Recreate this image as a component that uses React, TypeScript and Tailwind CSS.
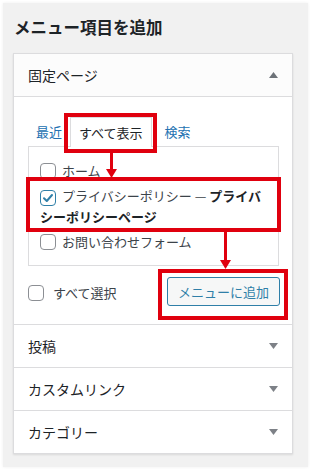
import React from "react";

function Checkbox({ checked = false }: { checked?: boolean }) {
  return (
    <span
      className={`inline-flex w-[16px] h-[16px] shrink-0 items-center justify-center rounded-[4px] border bg-white align-[-3px] ${
        checked ? "border-[#2f7fa8] border-[1.5px]" : "border-[#8c8f94]"
      }`}
    >
      {checked && (
        <svg width="12" height="12" viewBox="0 0 12 12">
          <path d="M2 6.2 L4.8 9 L10 3" fill="none" stroke="#2f7fa8" strokeWidth="2" strokeLinecap="round" strokeLinejoin="round" />
        </svg>
      )}
    </span>
  );
}

function Caret({ up = false }: { up?: boolean }) {
  return (
    <svg width="9" height="6" viewBox="0 0 9 6" className="mr-[14px]">
      {up ? <polygon points="0,6 9,6 4.5,0" fill="#6d7278" /> : <polygon points="0,0 9,0 4.5,6" fill="#7d8187" />}
    </svg>
  );
}

function DownArrow({ height }: { height: number }) {
  return (
    <svg width="11" height={height} viewBox={`0 0 11 ${height}`}>
      <rect x="4" y="0" width="3" height={height - 8} fill="#e0000e" />
      <polygon points={`0,${height - 9} 11,${height - 9} 5.5,${height}`} fill="#e0000e" />
    </svg>
  );
}

export default function App() {
  const sections = ["投稿", "カスタムリンク", "カテゴリー"];

  return (
    <div
      className="relative w-[313px] h-[474px] bg-white pt-[3px] pl-[3px] text-[#1d2327]"
      style={{ fontFamily: '"Noto Sans CJK JP", "Noto Sans", sans-serif' }}
    >
      <div className="w-[305px] h-[464px] bg-[#f1f1f1] pl-[10px] pt-[12px] shadow-[0_0_3px_rgba(0,0,0,0.07)]">
        <h2 className="text-[16.5px] font-bold leading-[24px] ml-px mb-[14px]">メニュー項目を追加</h2>

        <div className="w-[280px] border border-[#dcdcde] bg-white shadow-[0_1px_2px_rgba(0,0,0,0.1)]">
          {/* 固定ページ */}
          <div className="h-[43px] flex items-center justify-between pl-[14px] border-b border-[#dcdcde] bg-[#fcfcfc]">
            <span className="text-[14px]">固定ページ</span>
            <Caret up />
          </div>

          <div className="pt-[20px] pb-[18px] pl-[14px] pr-[13px]">
            <div className="h-[29px] flex items-end text-[13px] leading-[20px]">
              <span className="ml-[8px] mb-[4px] text-[#2271b1]">最近</span>
              <span className="ml-[8px] -mb-px h-[30px] px-[8px] flex items-center border border-b-0 border-[#dcdcde] bg-white relative z-10">
                すべて表示
              </span>
              <span className="ml-[13px] mb-[4px] text-[#2271b1]">検索</span>
            </div>

            <ul className="border border-[#dcdcde] pt-[13px] pb-[13px] pl-[11px] pr-[11px] text-[13px] leading-[21px] text-[#3c434a] flex flex-col gap-[4px]">
              <li>
                <Checkbox />
                <span className="ml-[6px]">ホーム</span>
              </li>
              <li>
                <Checkbox checked />
                <span className="ml-[6px]">プライバシーポリシー — </span>
                <b className="font-bold text-[#1d2327]">プライバ</b>
                <br />
                <b className="font-bold text-[#1d2327]">シーポリシーページ</b>
              </li>
              <li>
                <Checkbox />
                <span className="ml-[6px]">お問い合わせフォーム</span>
              </li>
            </ul>

            <div className="mt-[11px] flex items-center justify-between">
              <label className="flex items-center gap-[9px] text-[13px] text-[#3c434a] mt-[3px]">
                <Checkbox />
                すべて選択
              </label>
              <button className="h-[29px] px-[10px] rounded-[3px] border border-[#2f7fa8] bg-[#f6f7f7] text-[13px] text-[#2f7fa8] mr-[-1px]">
                メニューに追加
              </button>
            </div>
          </div>

          {sections.map((s) => (
            <div key={s} className="h-[43px] flex items-center justify-between pl-[14px] border-t border-[#dcdcde]">
              <span className="text-[14px]">{s}</span>
              <Caret />
            </div>
          ))}
        </div>
      </div>

      {/* annotations */}
      <div className="absolute left-[64px] top-[113px] w-[93px] h-[40px] border-4 border-[#e0000e] z-20" />
      <div className="absolute left-[106px] top-[153px] z-20">
        <DownArrow height={25} />
      </div>
      <div className="absolute left-[26px] top-[177px] w-[255px] h-[55px] border-4 border-[#e0000e] z-20" />
      <div className="absolute left-[220px] top-[232px] z-20">
        <DownArrow height={37} />
      </div>
      <div className="absolute left-[158px] top-[269px] w-[130px] h-[51px] border-4 border-[#e0000e] z-20" />
    </div>
  );
}
